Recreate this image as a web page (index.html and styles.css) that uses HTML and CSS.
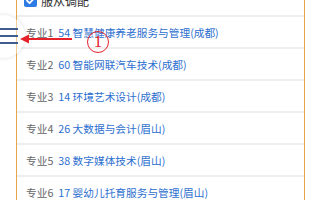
FILE: index.html
```html
<!DOCTYPE html>
<html lang="zh">
<head>
<meta charset="utf-8">
<link rel="stylesheet" href="styles.css">
</head>
<body>
<div class="panel">
  <div class="row top">
    <span class="check"><svg viewBox="0 0 13 13" width="13" height="13"><path d="M3 6.6 L5.6 9.2 L10.2 4.2" fill="none" stroke="#fff" stroke-width="1.8" stroke-linecap="round" stroke-linejoin="round"/></svg></span>
    <span class="label">服从调配</span>
  </div>
  <div class="row"><span class="tag">专业1</span><span class="name">54 智慧健康养老服务与管理(成都)</span></div>
  <div class="row"><span class="tag">专业2</span><span class="name">60 智能网联汽车技术(成都)</span></div>
  <div class="row"><span class="tag">专业3</span><span class="name">14 环境艺术设计(成都)</span></div>
  <div class="row"><span class="tag">专业4</span><span class="name">26 大数据与会计(眉山)</span></div>
  <div class="row"><span class="tag">专业5</span><span class="name">38 数字媒体技术(眉山)</span></div>
  <div class="row"><span class="tag">专业6</span><span class="name">17 婴幼儿托育服务与管理(眉山)</span></div>
</div>
<div class="fab"></div>
<div class="burger"><i></i><i></i><i></i></div>
<svg class="arrow" width="54" height="12" viewBox="0 0 54 12"><path d="M6 6 H52" stroke="#e5222a" stroke-width="2"/><polygon points="0,6 9,1.5 9,10.5" fill="#e5222a"/></svg>
<span class="mark">1</span>
</body>
</html>
```

FILE: styles.css
```css
html, body {
  margin: 0;
  padding: 0;
  background: #fff;
  overflow: hidden;
  width: 320px;
  height: 200px;
  position: relative;
}
body {
  font-family: "Noto Sans CJK SC", "Noto Sans", sans-serif;
  font-size: 10.7px;
}
.panel {
  margin: -15px 0 0 16px;
  width: 289px;
  box-sizing: border-box;
  border-left: 1px solid #e3a64b;
  border-right: 1px solid #e3a64b;
  min-height: 240px;
}
.row {
  height: 30px;
  border-bottom: 2px solid #eeeeee;
  display: flex;
  align-items: center;
  padding-left: 9px;
  white-space: nowrap;
}
.row.top {
  padding-left: 7px;
  font-size: 12px;
}
.check {
  width: 13px;
  height: 13px;
  background: #2d7be5;
  border-radius: 2px;
  display: flex;
  margin-right: 4px;
}
.label {
  color: #333;
}
.tag {
  color: #666;
  margin-right: 5px;
}
.name {
  color: #2d6fcf;
}
.fab {
  position: absolute;
  left: -18px;
  top: 15px;
  width: 43px;
  height: 43px;
  border-radius: 50%;
  background: rgba(255,255,255,0.45);
  box-shadow: 0 0 4px rgba(0,0,0,0.13);
}
.burger {
  position: absolute;
  left: 0;
  top: 28px;
  width: 18px;
  display: flex;
  flex-direction: column;
  gap: 5px;
}
.burger i {
  display: block;
  height: 2px;
  background: #3f5e8e;
}
.arrow {
  position: absolute;
  left: 20px;
  top: 33px;
}
.mark {
  position: absolute;
  left: 87px;
  top: 31px;
  width: 22px;
  height: 22px;
  box-sizing: border-box;
  border: 1.5px solid #e5222a;
  border-radius: 50%;
  color: #e5222a;
  font-family: "Liberation Serif", serif;
  font-size: 17px;
  line-height: 19px;
  text-align: center;
}
```
